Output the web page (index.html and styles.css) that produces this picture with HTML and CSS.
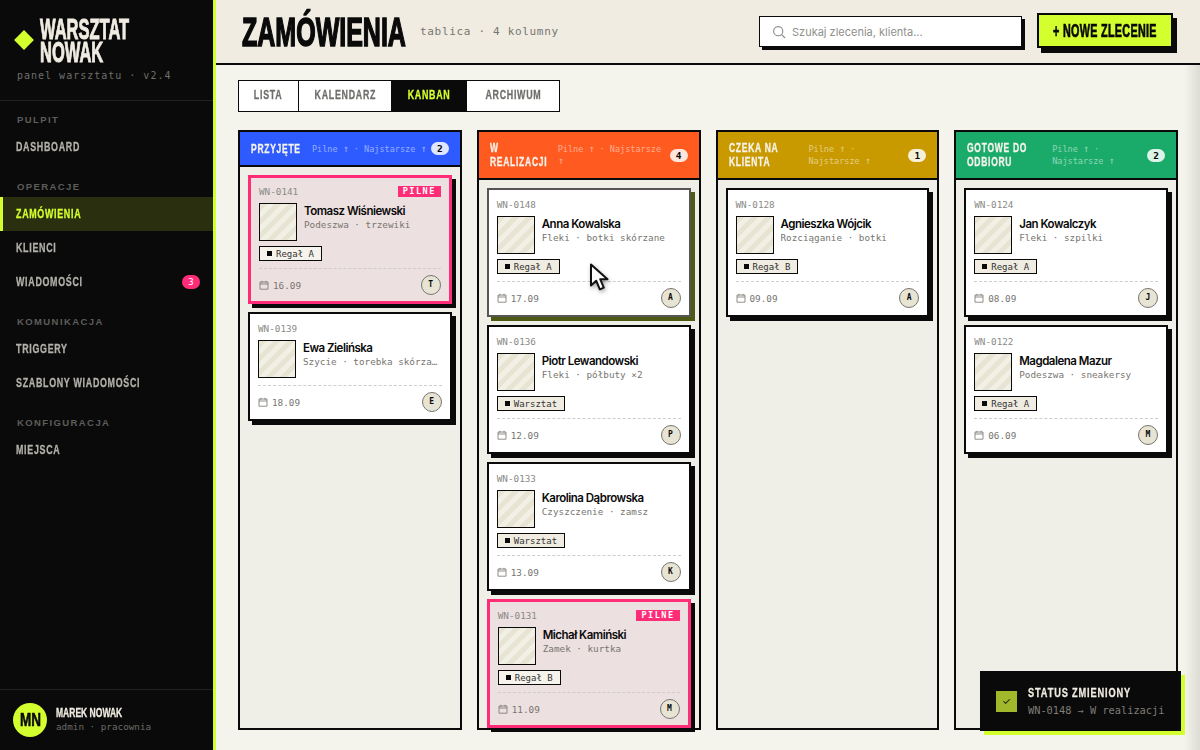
FILE: index.html
```html
<!DOCTYPE html>
<html lang="pl">
 <head>
  <meta charset="UTF-8" />
  <title>Warsztat Nowak - zamówienia</title>
  <link rel="stylesheet" href="styles.css">
 </head>
 <body>
  <svg class="sprite" width="0" height="0">
   <symbol id="cal" viewBox="0 0 10 10"><path d="M1 2h8v7.2H1zM1 4h8M3 .8v2M7 .8v2" fill="none" stroke="currentColor" stroke-width=".8"/></symbol>
  </svg>
  <div class="app">
   <aside class="sidebar">
    <div class="brand">
     <div class="brand-row">
      <span class="diamond"></span>
      <div class="brand-name"><span>WARSZTAT</span><span>NOWAK</span></div>
     </div>
     <div class="brand-sub">panel warsztatu · v2.4</div>
    </div>
    <nav class="nav">
     <div class="nav-label">PULPIT</div>
     <a class="nav-item"><span class="cond">DASHBOARD</span></a>
     <div class="nav-label">OPERACJE</div>
     <a class="nav-item active"><span class="cond">ZAMÓWIENIA</span></a>
     <a class="nav-item"><span class="cond">KLIENCI</span></a>
     <a class="nav-item"><span class="cond">WIADOMOŚCI</span><span class="nav-badge">3</span></a>
     <div class="nav-label">KOMUNIKACJA</div>
     <a class="nav-item"><span class="cond">TRIGGERY</span></a>
     <a class="nav-item"><span class="cond">SZABLONY WIADOMOŚCI</span></a>
     <div class="nav-label">KONFIGURACJA</div>
     <a class="nav-item"><span class="cond">MIEJSCA</span></a>
    </nav>
    <div class="user">
     <div class="user-avatar"><span class="cond">MN</span></div>
     <div>
      <div class="user-name"><span class="cond">MAREK NOWAK</span></div>
      <div class="user-role">admin · pracownia</div>
     </div>
    </div>
   </aside>

   <div class="main">
    <header class="topbar">
     <h1 class="title">ZAMÓWIENIA</h1>
     <span class="subtitle">tablica · 4 kolumny</span>
     <div class="search">
      <svg width="14" height="14" viewBox="0 0 14 14"><circle cx="6.2" cy="6.2" r="4.6" fill="none" stroke="#8a8a86" stroke-width="1.1"/><path d="M9.6 9.6 13 13" stroke="#8a8a86" stroke-width="1.1"/></svg>
      <span>Szukaj zlecenia, klienta...</span>
     </div>
     <button class="new-btn"><span class="cond">+ NOWE ZLECENIE</span></button>
    </header>

    <div class="content">
     <div class="tabs">
      <a class="tab tab-lista"><span class="cond">LISTA</span></a>
      <a class="tab tab-kal"><span class="cond">KALENDARZ</span></a>
      <a class="tab tab-kan on"><span class="cond">KANBAN</span></a>
      <a class="tab tab-arc"><span class="cond">ARCHIWUM</span></a>
     </div>

     <div class="board">
      <section class="col">
       <div class="col-head blue">
        <h2 class="t1"><span class="cond">PRZYJĘTE</span></h2>
        <span class="sort s1">Pilne <i>↑</i> · <span>Najstarsze</span> <i>↑</i></span>
        <span class="count">2</span>
       </div>
       <div class="col-body">
        <article class="card urgent">
         <div class="card-top"><span>WN-0141</span><b class="pilne">PILNE</b></div>
         <div class="card-main"><div class="thumb"></div><div class="info"><div class="name">Tomasz Wiśniewski</div><div class="desc">Podeszwa · trzewiki</div></div></div>
         <div class="tag"><i></i>Regał A</div>
         <div class="card-foot"><svg class="cal"><use href="#cal"/></svg><span>16.09</span><em class="who">T</em></div>
        </article>
        <article class="card">
         <div class="card-top"><span>WN-0139</span></div>
         <div class="card-main"><div class="thumb"></div><div class="info"><div class="name">Ewa Zielińska</div><div class="desc">Szycie · torebka skórzana</div></div></div>
         <div class="card-foot"><svg class="cal"><use href="#cal"/></svg><span>18.09</span><em class="who">E</em></div>
        </article>
       </div>
      </section>

      <section class="col">
       <div class="col-head orange">
        <h2 class="t2"><span class="cond">W<br>REALIZACJI</span></h2>
        <span class="sort s2">Pilne <i>↑</i> · <span>Najstarsze</span> <i>↑</i></span>
        <span class="count">4</span>
       </div>
       <div class="col-body">
        <article class="card dragged">
         <div class="card-top"><span>WN-0148</span></div>
         <div class="card-main"><div class="thumb"></div><div class="info"><div class="name">Anna Kowalska</div><div class="desc">Fleki · botki skórzane</div></div></div>
         <div class="tag"><i></i>Regał A</div>
         <div class="card-foot"><svg class="cal"><use href="#cal"/></svg><span>17.09</span><em class="who">A</em></div>
        </article>
        <article class="card">
         <div class="card-top"><span>WN-0136</span></div>
         <div class="card-main"><div class="thumb"></div><div class="info"><div class="name">Piotr Lewandowski</div><div class="desc">Fleki · półbuty ×2</div></div></div>
         <div class="tag"><i></i>Warsztat</div>
         <div class="card-foot"><svg class="cal"><use href="#cal"/></svg><span>12.09</span><em class="who">P</em></div>
        </article>
        <article class="card">
         <div class="card-top"><span>WN-0133</span></div>
         <div class="card-main"><div class="thumb"></div><div class="info"><div class="name">Karolina Dąbrowska</div><div class="desc">Czyszczenie · zamsz</div></div></div>
         <div class="tag"><i></i>Warsztat</div>
         <div class="card-foot"><svg class="cal"><use href="#cal"/></svg><span>13.09</span><em class="who">K</em></div>
        </article>
        <article class="card urgent">
         <div class="card-top"><span>WN-0131</span><b class="pilne">PILNE</b></div>
         <div class="card-main"><div class="thumb"></div><div class="info"><div class="name">Michał Kamiński</div><div class="desc">Zamek · kurtka</div></div></div>
         <div class="tag"><i></i>Regał B</div>
         <div class="card-foot"><svg class="cal"><use href="#cal"/></svg><span>11.09</span><em class="who">M</em></div>
        </article>
       </div>
      </section>

      <section class="col">
       <div class="col-head amber">
        <h2 class="t3"><span class="cond">CZEKA NA<br>KLIENTA</span></h2>
        <span class="sort s3">Pilne <i>↑</i> · <span>Najstarsze</span> <i>↑</i></span>
        <span class="count">1</span>
       </div>
       <div class="col-body">
        <article class="card">
         <div class="card-top"><span>WN-0128</span></div>
         <div class="card-main"><div class="thumb"></div><div class="info"><div class="name">Agnieszka Wójcik</div><div class="desc">Rozciąganie · botki</div></div></div>
         <div class="tag"><i></i>Regał B</div>
         <div class="card-foot"><svg class="cal"><use href="#cal"/></svg><span>09.09</span><em class="who">A</em></div>
        </article>
       </div>
      </section>

      <section class="col">
       <div class="col-head green">
        <h2 class="t4"><span class="cond">GOTOWE DO<br>ODBIORU</span></h2>
        <span class="sort s4">Pilne <i>↑</i> · <span>Najstarsze</span> <i>↑</i></span>
        <span class="count">2</span>
       </div>
       <div class="col-body">
        <article class="card">
         <div class="card-top"><span>WN-0124</span></div>
         <div class="card-main"><div class="thumb"></div><div class="info"><div class="name">Jan Kowalczyk</div><div class="desc">Fleki · szpilki</div></div></div>
         <div class="tag"><i></i>Regał A</div>
         <div class="card-foot"><svg class="cal"><use href="#cal"/></svg><span>08.09</span><em class="who">J</em></div>
        </article>
        <article class="card">
         <div class="card-top"><span>WN-0122</span></div>
         <div class="card-main"><div class="thumb"></div><div class="info"><div class="name">Magdalena Mazur</div><div class="desc">Podeszwa · sneakersy</div></div></div>
         <div class="tag"><i></i>Regał A</div>
         <div class="card-foot"><svg class="cal"><use href="#cal"/></svg><span>06.09</span><em class="who">M</em></div>
        </article>
       </div>
      </section>
     </div>
    </div>
    <div class="edge-shade"></div>
   </div>
  </div>

  <!-- toast + cursor lie over the board -->
  <div class="toast">
   <div class="toast-check">✓</div>
   <div>
    <div class="toast-title"><span class="cond">STATUS ZMIENIONY</span></div>
    <div class="toast-sub">WN-0148 → W realizacji</div>
   </div>
  </div>
  <svg class="cursor" width="22" height="29" viewBox="0 0 22 29">
   <path d="M2 1.5v21l5.2-4.8 3.6 8.6 4-1.7-3.6-8.4h7.3z" fill="#fff" stroke="#111" stroke-width="2" stroke-linejoin="round"/>
  </svg>
 </body>
</html>
```

FILE: styles.css
```css
* {
 box-sizing: border-box;
}

body {
 margin: 0;
 height: 750px;
 overflow: hidden;
 font-family: "Inter", sans-serif;
 background-color: #f5f4ec;
 color: #0a0a0a;
}

.sprite {
 position: absolute;
}

.app {
 display: flex;
 height: 750px;
}

/* no condensed face installed, so squeeze the bold one */
.cond {
 display: inline-block;
 white-space: nowrap;
 transform: scaleX(.71);
 transform-origin: left;
 -webkit-text-stroke: .3px;
}

/* sidebar */
.sidebar {
 width: 216px;
 flex: none;
 display: flex;
 flex-direction: column;
 background: #0a0a0a;
 border-right: 3px solid #d4ff2e;
}

.brand {
 height: 101px;
 padding: 17px 0 0 14px;
 border-bottom: 1px solid #222;
}

.brand-row {
 display: flex;
 align-items: center;
 gap: 8px;
}

.diamond {
 width: 14px;
 height: 14px;
 margin-left: 3px;
 margin-right: 1px;
 transform: rotate(45deg);
 background: #d4ff2e;
}

.brand-name {
 width: 90px;
 font: bold 30px/23px "Liberation Sans", sans-serif;
 color: #f0ece2;
}

.brand-name span {
 display: block;
 white-space: nowrap;
 transform: scaleX(.55);
 transform-origin: left;
 -webkit-text-stroke: 1px #f0ece2;
}

.brand-sub {
 margin: 6px 0 0 3px;
 font: 10px/14px "DejaVu Sans Mono", monospace;
 letter-spacing: 1px;
 color: #6f6f6b;
}

.nav {
 padding-top: 13px;
}

.nav-label {
 height: 11px;
 margin: 17px 0 5px 17px;
 font: bold 9.5px/11px "Liberation Sans", sans-serif;
 letter-spacing: 1.4px;
 color: #5d5d5a;
}

.nav-label:first-child {
 margin-top: 0;
}

.nav-item {
 display: flex;
 align-items: center;
 justify-content: space-between;
 height: 34px;
 padding: 0 13px 0 16px;
 font: bold 12.5px/34px "Liberation Sans", sans-serif;
 letter-spacing: 1px;
 color: #b3b1aa;
}

.nav-item.active {
 padding-left: 13px;
 border-left: 3px solid #d4ff2e;
 background: #2a2f10;
 color: #d4ff2e;
}

.nav-badge {
 width: 18px;
 height: 14px;
 border-radius: 7px;
 background: #ff2d78;
 color: #fff;
 text-align: center;
 font: 9px/14px "DejaVu Sans Mono", monospace;
 letter-spacing: 0;
}

.user {
 display: flex;
 align-items: center;
 gap: 9px;
 margin-top: auto;
 height: 61px;
 padding-left: 13px;
 border-top: 1px solid #222;
}

.user-avatar {
 width: 34px;
 height: 34px;
 padding-left: 7px;
 border-radius: 50%;
 background: #d4ff2e;
 color: #0a0a0a;
 font: bold 19px/34px "Liberation Sans", sans-serif;
}

.user-avatar .cond {
 -webkit-text-stroke: .6px;
}

.user-name {
 font: bold 12px/13px "Liberation Sans", sans-serif;
 color: #f0ece2;
}

.user-role {
 font: 9.3px/13px "DejaVu Sans Mono", monospace;
 color: #6a6a66;
}

/* header */
.main {
 position: relative;
 flex: 1;
 min-width: 0;
}

.topbar {
 display: flex;
 align-items: center;
 height: 65px;
 padding: 0 27px 0 26px;
 background: #f0ece2;
 border-bottom: 2px solid #0a0a0a;
}

.title {
 width: 163px;
 margin: 0;
 white-space: nowrap;
 font: bold 41px/46px "Liberation Sans", sans-serif;
 transform: scaleX(.61);
 transform-origin: left;
 -webkit-text-stroke: 1.6px #0a0a0a;
}

.subtitle {
 margin-left: 15px;
 font: 11px/14px "DejaVu Sans Mono", monospace;
 letter-spacing: .68px;
 color: #77756f;
}

.search {
 display: flex;
 align-items: center;
 gap: 6px;
 width: 263px;
 height: 31px;
 margin-left: auto;
 padding-left: 12px;
 background: #fff;
 border: 1.5px solid #0a0a0a;
 box-shadow: 3px 3px 0 #0a0a0a;
 font-size: 11px;
 color: #8f8f8b;
}

.new-btn {
 width: 136px;
 height: 35px;
 margin: 0 0 2px 15px;
 padding: 0 0 0 14px;
 text-align: left;
 background: #d4ff2e;
 border: 2px solid #0a0a0a;
 box-shadow: 4px 5px 0 #0a0a0a;
 color: #0a0a0a;
 font: bold 18px/30px "Liberation Sans", sans-serif;
 letter-spacing: .5px;
 white-space: nowrap;
}

.new-btn .cond {
 transform: scaleX(.6);
 -webkit-text-stroke: .7px;
}

/* tabs + board */
.content {
 padding: 15px 22px 22px;
}

.tabs {
 display: flex;
 width: 322px;
 height: 32px;
 background: #fff;
 border: 1.5px solid #0a0a0a;
}

.tab {
 text-align: center;
 font: bold 12.5px/29px "Liberation Sans", sans-serif;
 letter-spacing: 1px;
 color: #6e6e6a;
 border-right: 1.5px solid #0a0a0a;
}

.tab .cond {
 transform-origin: center;
}

.tab:last-child {
 border-right: 0;
}

.tab-lista { width: 60px; }
.tab-kal { width: 93px; }
.tab-kan { width: 75px; }
.tab-arc { flex: 1; }

.tab.on {
 background: #0a0a0a;
 color: #d4ff2e;
}

.board {
 display: grid;
 grid-template-columns: repeat(4, minmax(0, 1fr));
 gap: 15px;
 height: 597px;
 margin-top: 18px;
}

.col {
 border: 2px solid #0a0a0a;
 background: #efeee7;
}

.col-head {
 display: flex;
 align-items: center;
 padding: 0 11px;
 min-height: 35px;
 border-bottom: 2px solid #0a0a0a;
 color: #f5f3ec;
}

.blue { background: #2d5bff; }
.orange { background: #ff5a1f; height: 48px; }
.amber { background: #c99a00; height: 48px; }
.green { background: #1aab6a; height: 48px; }

.col-head h2 {
 flex: none;
 margin: 0;
 font: bold 12px/14px "Liberation Sans", sans-serif;
 letter-spacing: 1px;
}

.t1 { width: 61px; }
.t2 { width: 68px; }
.t3 { width: 80px; }
.t4 { width: 85px; }

.sort {
 font: 8.5px/12px "DejaVu Sans Mono", monospace;
 color: rgba(255, 255, 255, .5);
}

/* arrow reads too small at the label size */
.sort i {
 font-style: normal;
 font-size: 10px;
 line-height: 10px;
}

.s1 { width: 119px; }
.s2 { width: 112px; }
.s3 { width: 100px; }
.s4 { width: 94px; }

.count {
 flex: none;
 width: 18px;
 height: 13px;
 margin-left: auto;
 border-radius: 7px;
 background: rgba(255, 255, 255, .85);
 color: #0a0a0a;
 text-align: center;
 font: bold 9.5px/13px "DejaVu Sans Mono", monospace;
}

.col-body {
 display: flex;
 flex-direction: column;
 gap: 8px;
 padding: 8px 8px 0;
}

/* cards */
.card {
 padding: 10px 8px 7px;
 background: #fff;
 border: 2px solid #0a0a0a;
 box-shadow: 4px 4px 0 #0a0a0a;
 font-family: "DejaVu Sans Mono", monospace;
}

.card.urgent {
 padding: 9px 8px 6px;
 background: #ece0e0;
 border: 3px solid #ff2d78;
}

.card.dragged {
 border-color: #555;
 box-shadow: 4px 4px 0 #4d5a14;
}

.card-top {
 display: flex;
 align-items: center;
 justify-content: space-between;
 height: 10px;
 font-size: 9.3px;
 line-height: 10px;
 color: #8a8a86;
}

.pilne {
 height: 11px;
 margin-top: -2px;
 padding: 0 5px;
 background: #ff2d78;
 color: #fff;
 font-size: 8.5px;
 line-height: 11px;
 letter-spacing: 1.5px;
}

.card-main {
 display: flex;
 gap: 7px;
 margin-top: 6px;
}

.thumb {
 flex: none;
 width: 38px;
 height: 38px;
 border: 1.5px solid #0a0a0a;
 background: repeating-linear-gradient(135deg, #e8e4d4 0 5px, #f2efe4 5px 10px);
}

.info {
 flex: 1;
 min-width: 0;
 padding-top: 1px;
}

.name {
 font: 600 11.5px/14px "Inter", sans-serif;
 letter-spacing: -.5px;
 color: #0a0a0a;
 white-space: nowrap;
}

.desc {
 overflow: hidden;
 white-space: nowrap;
 text-overflow: ellipsis;
 font-size: 9.3px;
 line-height: 13px;
 color: #77756f;
}

.tag {
 display: flex;
 align-items: center;
 width: fit-content;
 height: 15px;
 margin-top: 5px;
 padding: 0 7px;
 background: #f0ece2;
 border: 1.5px solid #0a0a0a;
 font-size: 9px;
 color: #333;
}

.tag i {
 width: 5px;
 height: 5px;
 margin-right: 4px;
 background: #0a0a0a;
}

.urgent .tag {
 background: #f5f3ec;
}

.card-foot {
 display: flex;
 align-items: center;
 gap: 4px;
 margin-top: 7px;
 padding-top: 6px;
 border-top: 1px dashed #cfcdc6;
 font-size: 9.3px;
 color: #77756f;
}

.cal {
 width: 10px;
 height: 10px;
}

.who {
 width: 20px;
 height: 20px;
 margin-left: auto;
 border-radius: 50%;
 background: #e8e4d4;
 border: 1.5px solid #77756f;
 color: #0a0a0a;
 text-align: center;
 font-style: normal;
 font-weight: bold;
 font-size: 8px;
 line-height: 17px;
}

/* overlays */
.edge-shade {
 position: absolute;
 top: 65px;
 right: 0;
 bottom: 0;
 width: 16px;
 background: linear-gradient(to right, rgba(0, 0, 0, 0), rgba(0, 0, 0, .1));
}

.toast {
 position: absolute;
 left: 980px;
 top: 671px;
 display: flex;
 align-items: center;
 gap: 11px;
 width: 201px;
 height: 60px;
 padding-left: 16px;
 background: #0a0a0a;
 box-shadow: 4px 4px 0 #d4ff2e;
}

.toast-check {
 width: 21px;
 height: 21px;
 background: #a0b82a;
 color: #0a0a0a;
 text-align: center;
 font-size: 10px;
 line-height: 21px;
}

.toast-title {
 font: bold 13px/15px "Liberation Sans", sans-serif;
 letter-spacing: 1.2px;
 color: #f0ece2;
}

.toast-sub {
 margin-top: 4px;
 font: 10.3px/13px "DejaVu Sans Mono", monospace;
 color: #7f7d77;
}

.cursor {
 position: absolute;
 left: 589px;
 top: 263px;
 filter: drop-shadow(1px 2px 2px rgba(0, 0, 0, .35));
}
```
